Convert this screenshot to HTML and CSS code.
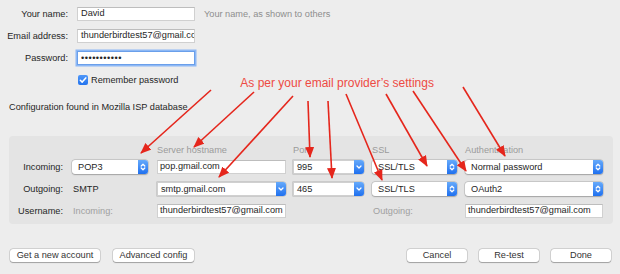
FILE: index.html
```html
<!DOCTYPE html>
<html lang="en">
<head>
    <meta charset="UTF-8">
    <title>Mail Account Setup</title>
    <link rel="stylesheet" href="styles.css">
</head>
<body>
    <div class="account">
        <span class="lbl">Your name:</span>
        <div class="field">David</div>
        <span class="hint">Your name, as shown to others</span>

        <span class="lbl">Email address:</span>
        <div class="field">thunderbirdtest57@gmail.com</div>
        <span></span>

        <span class="lbl">Password:</span>
        <input class="field focus" type="password" value="abcdefghijk">
        <span></span>

        <div class="remember">
            <span class="check">
                <svg width="10" height="10" viewBox="0 0 10 10"><polyline points="2.3,5.2 4.2,7.1 7.8,2.9" fill="none" stroke="#fff" stroke-width="1.5" stroke-linecap="round" stroke-linejoin="round"/></svg>
            </span>
            <span>Remember password</span>
            <span class="callout">As per your email provider’s settings</span>
        </div>
    </div>

    <p class="found">Configuration found in Mozilla ISP database</p>

    <div class="servers">
        <span></span>
        <span></span>
        <span class="head">Server hostname</span>
        <span class="head">Port</span>
        <span class="head">SSL</span>
        <span class="head">Authentication</span>

        <span class="lbl">Incoming:</span>
        <div class="pop w-proto"><span class="val">POP3</span><span class="step"><svg width="10" height="14" viewBox="0 0 10 14"><polyline points="3.2,6 5,4.2 6.8,6" /><polyline points="3.2,8 5,9.8 6.8,8" /></svg></span></div>
        <div class="field w-host">pop.gmail.com</div>
        <div class="combo w-port"><span class="val">995</span><span class="step"><svg width="10" height="14" viewBox="0 0 10 14"><polyline points="3,6 5,8 7,6" /></svg></span></div>
        <div class="pop w-ssl"><span class="val">SSL/TLS</span><span class="step"><svg width="10" height="14" viewBox="0 0 10 14"><polyline points="3.2,6 5,4.2 6.8,6" /><polyline points="3.2,8 5,9.8 6.8,8" /></svg></span></div>
        <div class="pop w-auth"><span class="val">Normal password</span><span class="step"><svg width="10" height="14" viewBox="0 0 10 14"><polyline points="3.2,6 5,4.2 6.8,6" /><polyline points="3.2,8 5,9.8 6.8,8" /></svg></span></div>

        <span class="lbl">Outgoing:</span>
        <span class="plain">SMTP</span>
        <div class="combo w-host"><span class="val">smtp.gmail.com</span><span class="step"><svg width="10" height="14" viewBox="0 0 10 14"><polyline points="3,6 5,8 7,6" /></svg></span></div>
        <div class="combo w-port"><span class="val">465</span><span class="step"><svg width="10" height="14" viewBox="0 0 10 14"><polyline points="3,6 5,8 7,6" /></svg></span></div>
        <div class="pop w-ssl"><span class="val">SSL/TLS</span><span class="step"><svg width="10" height="14" viewBox="0 0 10 14"><polyline points="3.2,6 5,4.2 6.8,6" /><polyline points="3.2,8 5,9.8 6.8,8" /></svg></span></div>
        <div class="pop w-auth"><span class="val">OAuth2</span><span class="step"><svg width="10" height="14" viewBox="0 0 10 14"><polyline points="3.2,6 5,4.2 6.8,6" /><polyline points="3.2,8 5,9.8 6.8,8" /></svg></span></div>

        <span class="lbl">Username:</span>
        <span class="plain dim">Incoming:</span>
        <div class="field w-host">thunderbirdtest57@gmail.com</div>
        <span></span>
        <span class="plain dim">Outgoing:</span>
        <div class="field w-auth">thunderbirdtest57@gmail.com</div>
    </div>

    <div class="actions">
        <button class="btn w-new">Get a new account</button>
        <button class="btn w-adv">Advanced config</button>
        <span class="spacer"></span>
        <button class="btn w-small">Cancel</button>
        <button class="btn w-small">Re-test</button>
        <button class="btn w-small">Done</button>
    </div>

    <!-- red annotation arrows drawn over the dialog -->
    <svg class="notes" width="620" height="274" viewBox="0 0 620 274">
        <defs>
            <marker id="head" markerUnits="userSpaceOnUse" markerWidth="11" markerHeight="10" viewBox="0 0 11 10" refX="10" refY="5" orient="auto">
                <path d="M0,0.5 L11,5 L0,9.5 z" fill="#e5261c"/>
            </marker>
        </defs>
        <g stroke="#e5261c" stroke-width="1.6" marker-end="url(#head)">
            <line x1="211" y1="90" x2="141" y2="153"/>
            <line x1="254" y1="92" x2="194" y2="147"/>
            <line x1="293" y1="96" x2="219" y2="177"/>
            <line x1="308" y1="101" x2="310" y2="157"/>
            <line x1="328" y1="101" x2="332" y2="178"/>
            <line x1="346" y1="94" x2="382" y2="180"/>
            <line x1="386" y1="94" x2="427" y2="166"/>
            <line x1="413" y1="91" x2="466" y2="171"/>
            <line x1="463" y1="87" x2="505" y2="156"/>
        </g>
    </svg>
</body>
</html>
```

FILE: styles.css
```css
* {
    box-sizing: border-box;
}
body {
    margin: 0;
    width: 620px;
    height: 274px;
    overflow: hidden;
    position: relative;
    background: #ededed;
    font-family: "Liberation Sans", Arial, sans-serif;
    font-size: 9.2px;
    color: #262626;
}

/* top part */
.account {
    display: grid;
    grid-template-columns: 68px 118px auto;
    grid-auto-rows: 22px;
    column-gap: 9px;
    align-items: center;
    padding-top: 3px;
}
.lbl {
    text-align: right;
}
.field {
    height: 14px;
    background: #fff;
    border: 1px solid #d0d0d0;
    border-top-color: #bdbdbd;
    padding: 0 2px;
    line-height: 12px;
    white-space: nowrap;
    overflow: hidden;
    font: inherit;
    color: inherit;
}
.account .field {
    padding: 0 3px;
}
.field.focus {
    outline: none;
    border-color: #6a9fea;
    box-shadow: 0 0 0 1.5px #8db8f5;
    letter-spacing: 0.5px;
}
.hint {
    color: #8e8e8e;
}
.remember {
    grid-column: 2 / 4;
    height: 20px;
    display: flex;
    align-items: center;
}
.check {
    width: 10px;
    height: 10px;
    margin: 0 3px 0 1px;
    border-radius: 2px;
    background: linear-gradient(#4f97f8, #2374ee);
    display: flex;
}
.callout {
    margin-left: 62px;
    margin-top: 5px;
    font-size: 12px;
    color: #ee4a43;
}
.found {
    margin: 8px 0 0 9px;
    line-height: 16px;
}

/* server settings box */
.servers {
    margin: 21px 7px 0 9px;
    height: 88px;
    padding-top: 8px;
    background: #e4e4e4;
    border-radius: 4px;
    display: grid;
    grid-template-columns: 63px 85px 136px 79px 93px 138px;
    grid-template-rows: 12px 22px 22px 22px;
    align-items: center;
}
.servers .lbl {
    padding-right: 9px;
}
.head {
    color: #9b9b9b;
}
.plain {
    padding-left: 1px;
}
.dim {
    color: #a0a0a0;
}
.w-proto { width: 76px; }
.w-host { width: 129px; }
.w-port { width: 71px; }
.w-ssl { width: 85px; }
.w-auth { width: 138px; }

.pop, .combo {
    height: 14px;
    display: flex;
    background: #fff;
    border-radius: 3px;
    box-shadow: 0 0 0 0.5px rgba(0, 0, 0, 0.18), 0 0.5px 1.5px rgba(0, 0, 0, 0.22);
}
.combo {
    border-radius: 0 3px 3px 0;
    box-shadow: 0 0 0 0.5px rgba(0, 0, 0, 0.22);
}
.val {
    flex: 1;
    padding-left: 6px;
    line-height: 14px;
    white-space: nowrap;
    overflow: hidden;
}
.combo .val {
    padding-left: 3px;
    border: 1px solid #d0d0d0;
    border-right: none;
    line-height: 12px;
}
.step {
    width: 10px;
    height: 14px;
    border-radius: 0 3px 3px 0;
    background: linear-gradient(#66aafb, #1f70ef);
}
.step svg {
    display: block;
    fill: none;
    stroke: #fff;
    stroke-width: 1.3;
    stroke-linecap: round;
    stroke-linejoin: round;
}

/* buttons */
.actions {
    display: flex;
    gap: 12px;
    margin: 25px 9px 0 10px;
}
.spacer {
    flex: 1;
}
.btn {
    height: 13px;
    padding: 0;
    border: none;
    border-radius: 3px;
    background: #fff;
    box-shadow: 0 0 0 0.5px rgba(0, 0, 0, 0.2), 0 0.5px 1px rgba(0, 0, 0, 0.25);
    font: inherit;
    color: #333;
    line-height: 13px;
}
.w-new { width: 90px; }
.w-adv { width: 81px; margin-left: 1px; }
.w-small { width: 60px; }

.notes {
    position: absolute;
    top: 0;
    left: 0;
    pointer-events: none;
}
```
